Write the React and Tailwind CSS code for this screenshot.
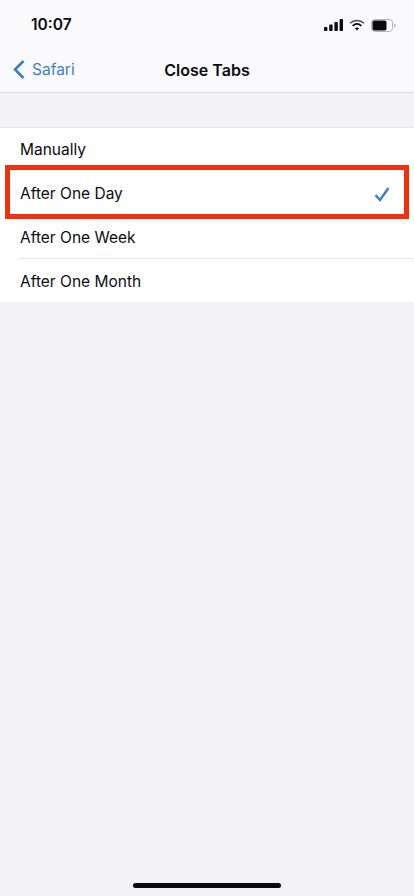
import React from "react";

const rows = ["Manually", "After One Day", "After One Week", "After One Month"];

const StatusIcons = () => (
  <div className="flex items-center gap-[6px]">
    <svg width="19" height="12" viewBox="0 0 19 12" fill="#0b0b0f">
      <rect x="0" y="8" width="3.4" height="4" rx="0.8" />
      <rect x="5.2" y="5.5" width="3.4" height="6.5" rx="0.8" />
      <rect x="10.4" y="3" width="3.4" height="9" rx="0.8" />
      <rect x="15.6" y="0" width="3.4" height="12" rx="0.8" />
    </svg>
    <svg width="16" height="12" viewBox="0 0 16 12" fill="none" stroke="#4a4a4f">
      <path d="M1 4.2C5 .6 11 .6 15 4.2" strokeWidth="1.4" />
      <path d="M3.6 6.8c2.6-2.2 6.2-2.2 8.8 0" strokeWidth="1.6" stroke="#0b0b0f" />
      <path d="M8 11.6 5.9 9.3c1.2-1 3-1 4.2 0z" fill="#0b0b0f" stroke="none" />
    </svg>
    <svg width="25" height="13" viewBox="0 0 25 13" fill="none">
      <rect x="0.5" y="0.5" width="21" height="12" rx="3.2" stroke="#b4b4b9" />
      <rect x="1.5" y="1.5" width="14" height="10" rx="1.8" fill="#0b0b0f" />
      <path d="M23 4.4c1 .3 1.6 1.1 1.6 2.1s-.6 1.8-1.6 2.1z" fill="#b4b4b9" />
    </svg>
  </div>
);

export default function App() {
  return (
    <div
      className="relative flex h-[896px] w-[414px] flex-col overflow-hidden bg-[#f2f2f7] text-[#0b0b0f]"
      style={{ fontFamily: '"Inter", "Liberation Sans", sans-serif' }}
    >
      {/* Status bar + nav */}
      <div className="h-[93px] border-b border-[#dcdce0] bg-[#fafafc]">
        <div className="flex h-[47px] items-center justify-between pl-[31px] pr-[18px] pt-[3px]">
          <span className="text-[15.5px] font-semibold leading-none">10:07</span>
          <StatusIcons />
        </div>
        <div className="relative flex h-[46px] items-center justify-center">
          <div className="absolute left-[12px] top-[12px] flex items-center gap-[6px] text-[#3b82c4]">
            <svg width="14" height="21" viewBox="0 0 14 21" fill="none" stroke="#3a7fc2" strokeWidth="2.6">
              <path d="M11.5 2 3 10.5l8.5 8.5" />
            </svg>
            <span className="text-[15.5px] leading-none">Safari</span>
          </div>
          <span className="text-[16px] font-semibold leading-none">Close Tabs</span>
        </div>
      </div>

      {/* Options list */}
      <div className="mt-[34px] border-t border-[#e4e4e9] bg-white">
        <div className="flex h-[44px] items-center pl-[20px]">
          <span className="text-[15.5px] leading-none">{rows[0]}</span>
        </div>
        <div className="flex h-[44px] items-center justify-between pl-[20px] pr-[24px]">
          <span className="text-[15.5px] leading-none">{rows[1]}</span>
          <svg width="16" height="15" viewBox="0 0 16 15" fill="none" stroke="#3a7fc2" strokeWidth="2.4">
            <path d="M1.5 8 6 13 14.5 1" />
          </svg>
        </div>
        <div className="ml-[20px] flex h-[43px] items-center border-b border-[#e4e4e9] pt-[2px]">
          <span className="text-[15.5px] leading-none">{rows[2]}</span>
        </div>
        <div className="flex h-[43px] items-center pl-[20px] pt-[2px]">
          <span className="text-[15.5px] leading-none">{rows[3]}</span>
        </div>
      </div>

      {/* Red highlight over the selected row */}
      <div className="absolute left-[5px] top-[165px] h-[54px] w-[404px] border-[5px] border-[#f2300f]" />

      {/* Home indicator */}
      <div className="absolute bottom-[8px] left-[133px] h-[5px] w-[148px] rounded-full bg-[#0b0b0f]" />
    </div>
  );
}
